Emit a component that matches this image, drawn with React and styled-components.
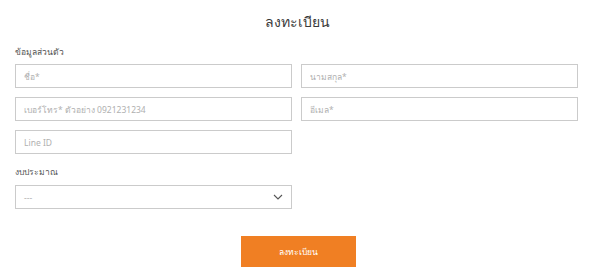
import styled, { createGlobalStyle } from "styled-components";

const GlobalStyle = createGlobalStyle`
  body {
    margin: 0;
    background: #fff;
    font-family: "Noto Sans", "Liberation Sans", sans-serif;
  }
`;

const Page = styled.div`
  width: 600px;
  height: 279px;
  padding: 12px 15px 0 15px;
  box-sizing: border-box;
`;

const Title = styled.h1`
  margin: 0;
  padding-right: 6px;
  text-align: center;
  font-size: 14px;
  font-weight: 400;
  color: #3a3a3a;
  line-height: 20px;
`;

const Label = styled.div`
  font-size: 8.5px;
  color: #555;
  margin-top: ${p => p.$top || 0}px;
  height: 14px;
  line-height: 14px;
`;

const Grid = styled.div`
  display: grid;
  grid-template-columns: 277px 277px;
  column-gap: 9px;
  row-gap: 9px;
  margin-top: 5px;
`;

const Input = styled.input`
  box-sizing: border-box;
  height: 24px;
  width: 100%;
  border: 1px solid #cbcbcb;
  padding: 0 8px;
  font-family: inherit;
  font-size: 8.5px;
  color: #555;
  outline: none;
  &::placeholder {
    color: #b0b0b0;
  }
`;

const SelectBox = styled.div`
  box-sizing: border-box;
  width: 277px;
  height: 24px;
  border: 1px solid #cbcbcb;
  margin-top: 6px;
  padding: 0 8px;
  display: flex;
  align-items: center;
  justify-content: space-between;
  font-size: 8.5px;
  color: #b0b0b0;
`;

const ButtonRow = styled.div`
  display: flex;
  justify-content: center;
  margin-top: 27px;
  padding-right: 4px;
`;

const Button = styled.button`
  width: 115px;
  height: 31px;
  border: none;
  background: #f07f23;
  color: #fff;
  font-family: inherit;
  font-size: 8.5px;
`;

function Chevron() {
  return (
    <svg width="10" height="6" viewBox="0 0 10 6">
      <path d="M1 1 L5 5 L9 1" fill="none" stroke="#555" strokeWidth="1.1" />
    </svg>
  );
}

export default function App() {
  return (
    <Page>
      <GlobalStyle />
      <Title>ลงทะเบียน</Title>
      <Label $top={13}>ข้อมูลส่วนตัว</Label>
      <Grid>
        <Input placeholder="ชื่อ*" />
        <Input placeholder="นามสกุล*" />
        <Input placeholder="เบอร์โทร* ตัวอย่าง 0921231234" />
        <Input placeholder="อีเมล*" />
        <Input placeholder="Line ID" />
      </Grid>
      <Label $top={11}>งบประมาณ</Label>
      <SelectBox>
        <span>---</span>
        <Chevron />
      </SelectBox>
      <ButtonRow>
        <Button>ลงทะเบียน</Button>
      </ButtonRow>
    </Page>
  );
}
